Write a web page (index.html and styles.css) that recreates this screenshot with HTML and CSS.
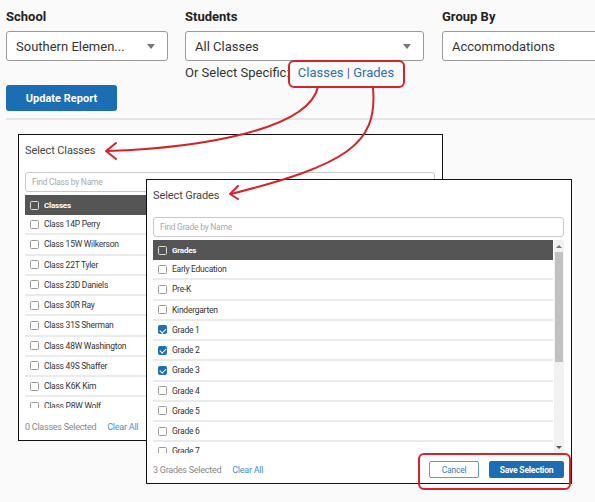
FILE: index.html
```html
<!DOCTYPE html>
<html lang="en">
<head>
  <meta charset="UTF-8">
  <meta name="viewport" content="width=device-width, initial-scale=1.0">
  <title>Report Filters</title>
  <link rel="stylesheet" href="styles.css">
</head>
<body>
  <div class="page">
    <div class="filters">
      <div class="field">
        <div class="label">School</div>
        <div class="select"><span>Southern Elemen...</span><i class="caret"></i></div>
        <button class="update">Update Report</button>
      </div>
      <div class="field">
        <div class="label">Students</div>
        <div class="select"><span>All Classes</span><i class="caret"></i></div>
        <div class="specific">Or Select Specific: <span class="links"><a>Classes</a> <span class="pipe">|</span> <a>Grades</a></span></div>
      </div>
      <div class="field field-last">
        <div class="label">Group By</div>
        <div class="select"><span>Accommodations</span></div>
      </div>
    </div>
    <div class="divider"></div>

    <div class="panels">
      <div class="picker picker-classes">
        <div class="picker-title">Select Classes</div>
        <input class="picker-search" placeholder="Find Class by Name">
        <div class="picker-body">
          <div class="picker-list">
            <div class="picker-head"><span class="cb"></span>Classes</div>
            <div class="picker-row"><span class="cb"></span>Class 14P Perry</div>
            <div class="picker-row"><span class="cb"></span>Class 15W Wilkerson</div>
            <div class="picker-row"><span class="cb"></span>Class 22T Tyler</div>
            <div class="picker-row"><span class="cb"></span>Class 23D Daniels</div>
            <div class="picker-row"><span class="cb"></span>Class 30R Ray</div>
            <div class="picker-row"><span class="cb"></span>Class 31S Sherman</div>
            <div class="picker-row"><span class="cb"></span>Class 48W Washington</div>
            <div class="picker-row"><span class="cb"></span>Class 49S Shaffer</div>
            <div class="picker-row"><span class="cb"></span>Class K6K Kim</div>
            <div class="picker-row"><span class="cb"></span>Class P8W Wolf</div>
          </div>
        </div>
        <div class="picker-foot">
          <span class="count">0 Classes Selected</span>
          <a class="clear">Clear All</a>
        </div>
      </div>

      <div class="picker picker-grades">
        <div class="picker-title">Select Grades</div>
        <input class="picker-search" placeholder="Find Grade by Name">
        <div class="picker-body">
          <div class="picker-list">
            <div class="picker-head"><span class="cb"></span>Grades</div>
            <div class="picker-row"><span class="cb"></span>Early Education</div>
            <div class="picker-row"><span class="cb"></span>Pre-K</div>
            <div class="picker-row"><span class="cb"></span>Kindergarten</div>
            <div class="picker-row"><span class="cb on"></span>Grade 1</div>
            <div class="picker-row"><span class="cb on"></span>Grade 2</div>
            <div class="picker-row"><span class="cb on"></span>Grade 3</div>
            <div class="picker-row"><span class="cb"></span>Grade 4</div>
            <div class="picker-row"><span class="cb"></span>Grade 5</div>
            <div class="picker-row"><span class="cb"></span>Grade 6</div>
            <div class="picker-row"><span class="cb"></span>Grade 7</div>
          </div>
          <div class="scrollbar">
            <div class="sb-btn"><i class="sb-up"></i></div>
            <div class="sb-thumb"></div>
            <div class="sb-fill"></div>
            <div class="sb-btn"><i class="sb-down"></i></div>
          </div>
        </div>
        <div class="picker-foot">
          <span class="count">3 Grades Selected</span>
          <a class="clear">Clear All</a>
          <div class="actions">
            <button class="btn-cancel">Cancel</button>
            <button class="btn-save">Save Selection</button>
          </div>
        </div>
      </div>
    </div>

    <!-- red callouts drawn on top of the screenshot -->
    <svg class="marks" viewBox="0 0 595 502" width="595" height="502">
      <g fill="none" stroke="#d4232b" stroke-width="2" stroke-linecap="round" stroke-linejoin="round">
        <rect x="289" y="61" width="115" height="26" rx="5"/>
        <path d="M318 87 C308 130 200 148 107 151"/>
        <path d="M116 143 L106 151 L116 159"/>
        <path d="M373 88 C378 145 345 165 231 194"/>
        <path d="M238 186 L230 194 L238 199"/>
        <rect x="419" y="454" width="151" height="35" rx="5"/>
      </g>
    </svg>
  </div>
</body>
</html>
```

FILE: styles.css
```css
* {
  margin: 0;
  padding: 0;
  box-sizing: border-box;
}
html, body {
  overflow: hidden;
}
body {
  background: #fafafa;
  font-family: Roboto, "Liberation Sans", sans-serif;
  color: #222;
}
.page {
  position: relative;
  width: 595px;
  height: 502px;
  padding: 9px 0 0 6px;
}

/* top filter bar */
.filters {
  display: grid;
  grid-template-columns: 162px 239px 170px;
  column-gap: 17px;
}
.field-last {
  margin-left: 1px;
}
.label {
  font-size: 13px;
  font-weight: 700;
  line-height: 16px;
  margin-bottom: 6px;
  color: #222;
}
.select {
  height: 30px;
  border: 1px solid #9a9a9a;
  border-radius: 3px;
  background: #fff;
  display: flex;
  align-items: center;
  justify-content: space-between;
  padding: 0 12px 0 9px;
  font-size: 13px;
  color: #333;
}
.caret {
  width: 0;
  height: 0;
  border-left: 4px solid transparent;
  border-right: 4px solid transparent;
  border-top: 5px solid #777;
}
.update {
  display: block;
  margin-top: 24px;
  width: 111px;
  height: 26px;
  background: #1b6db4;
  color: #fff;
  border: 0;
  border-radius: 3px;
  font-family: inherit;
  font-size: 11px;
  font-weight: 700;
}
.specific {
  margin-top: 4px;
  font-size: 13px;
  line-height: 16px;
  color: #333;
}
.specific .links {
  margin-left: 5px;
  color: #2d6db3;
}
.specific .pipe {
  color: #5a5a9c;
}
.divider {
  height: 2px;
  background: #e4e4e4;
  margin-top: 7px;
}

/* picker panels */
.panels {
  position: relative;
  margin-top: 14px;
}
.picker {
  background: #fff;
  border: 1.5px solid #111;
  padding: 9px 7px 0 6px;
  display: flex;
  flex-direction: column;
}
.picker-classes {
  width: 425px;
  height: 307px;
  margin-left: 12px;
}
.picker-grades {
  position: absolute;
  left: 140px;
  top: 45px;
  width: 426px;
  height: 305px;
}
.picker-title {
  font-size: 11px;
  line-height: 14px;
  letter-spacing: -0.1px;
  color: #444;
}
.picker-search {
  margin-top: 14px;
  width: 100%;
  height: 20px;
  border: 1px solid #c8c8c8;
  border-radius: 3px;
  padding-left: 6px;
  font-family: inherit;
  font-size: 8.5px;
  letter-spacing: -0.25px;
  outline: none;
}
.picker-search::placeholder {
  color: #aaa;
}
.picker-body {
  margin-top: 3px;
  height: 213px;
  display: flex;
}
.picker-list {
  flex: 1;
  overflow: hidden;
}
.picker-head {
  height: 20px;
  background: #555;
  color: #fff;
  font-size: 8px;
  font-weight: 700;
  letter-spacing: -0.2px;
  display: flex;
  align-items: center;
}
.picker-row {
  height: 20.25px;
  border-bottom: 2px solid #ebebeb;
  font-size: 8.5px;
  letter-spacing: -0.25px;
  color: #333;
  display: flex;
  align-items: center;
}
.cb {
  position: relative;
  flex: none;
  width: 9px;
  height: 9px;
  border: 1px solid #9a9a9a;
  border-radius: 1.5px;
  background: #fff;
  margin: 0 5.5px 0 4.5px;
}
.picker-head .cb {
  background: transparent;
  border-color: #ddd;
}
.cb.on {
  background: #1f6fb8;
  border-color: #1f6fb8;
}
.cb.on::after {
  content: '';
  position: absolute;
  left: 2.3px;
  top: 0.3px;
  width: 2.5px;
  height: 5px;
  border: solid #fff;
  border-width: 0 1.2px 1.2px 0;
  transform: rotate(45deg);
}

/* fake scrollbar */
.scrollbar {
  width: 10px;
  margin-left: 1px;
  background: #f1f1f1;
  display: flex;
  flex-direction: column;
}
.sb-btn {
  height: 12px;
  display: flex;
  align-items: center;
  justify-content: center;
}
.sb-up, .sb-down {
  width: 0;
  height: 0;
  border-left: 3px solid transparent;
  border-right: 3px solid transparent;
}
.sb-up {
  border-bottom: 3px solid #777;
}
.sb-down {
  border-top: 3px solid #555;
}
.sb-thumb {
  height: 110px;
  margin: 0 1px;
  background: #c1c1c1;
}
.sb-fill {
  flex: 1;
}

.picker-foot {
  display: flex;
  align-items: center;
  height: 17px;
  margin-top: 8px;
  font-size: 9px;
  letter-spacing: -0.25px;
}
.picker-classes .picker-foot {
  margin-top: 10px;
}
.count {
  color: #888;
}
.clear {
  margin-left: 11px;
  color: #4a8fd3;
}
.actions {
  margin-left: auto;
  display: flex;
  gap: 10px;
}
.btn-cancel, .btn-save {
  height: 17px;
  border-radius: 2px;
  font-family: inherit;
  font-size: 8.5px;
  letter-spacing: -0.2px;
}
.btn-cancel {
  width: 50px;
  background: #fff;
  border: 1px solid #5d9ad6;
  color: #3d7cc0;
}
.btn-save {
  width: 75px;
  background: #1b6db4;
  border: 0;
  color: #fff;
  font-weight: 700;
}

.marks {
  position: absolute;
  left: 0;
  top: 0;
  pointer-events: none;
}
```
